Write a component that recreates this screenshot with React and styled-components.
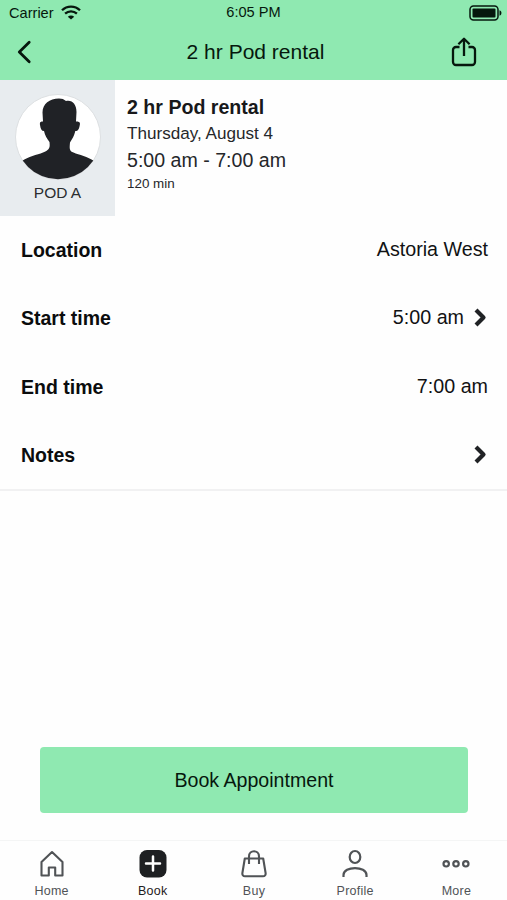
import React from 'react';
import styled, { createGlobalStyle } from 'styled-components';

const GlobalStyle = createGlobalStyle`
  * {
    box-sizing: border-box;
  }
  body {
    margin: 0;
    background: #fefefe;
    font-family: "Liberation Sans", Arial, sans-serif;
  }
  p {
    margin: 0;
  }
  svg {
    display: block;
  }
`;

const Screen = styled.div`
  display: flex;
  flex-direction: column;
  width: 507px;
  height: 900px;
  overflow: hidden;
  color: #111213;
`;

const Header = styled.header`
  height: 80px;
  background: #8fe9b1;
  color: #06170d;
`;

const StatusBar = styled.div`
  display: grid;
  grid-template-columns: 1fr auto 1fr;
  align-items: center;
  height: 24px;
  padding: 0 5px 0 9px;
  font-size: 14.6px;
`;

const Carrier = styled.div`
  display: flex;
  align-items: center;
  gap: 7px;
  padding-top: 1px;
`;

const Clock = styled.div`
  margin-right: 4px;
`;

const Battery = styled.div`
  justify-self: end;
  padding-top: 2px;
`;

const TitleBar = styled.div`
  display: grid;
  grid-template-columns: 48px 1fr 48px;
  align-items: center;
  height: 56px;
  padding: 0 30px 0 12px;
`;

const Title = styled.h1`
  margin: 0;
  padding-left: 22px;
  text-align: center;
  font-size: 21px;
  font-weight: 400;
`;

const IconButton = styled.button`
  display: flex;
  justify-content: ${({ $end }) => ($end ? 'flex-end' : 'flex-start')};
  padding: 0;
  border: 0;
  background: none;
  color: inherit;
`;

const Summary = styled.section`
  display: flex;
  height: 137px;
`;

const Provider = styled.div`
  display: flex;
  flex-direction: column;
  align-items: center;
  width: 115px;
  height: 136px;
  padding-top: 14px;
  background: #e8ecef;
  color: #2b2d30;
  font-size: 15.5px;
  line-height: 18px;

  > svg {
    margin-bottom: 4px;
  }
`;

const Details = styled.div`
  padding: 15px 0 0 12px;
`;

const Line = styled.p`
  height: ${({ $height }) => $height}px;
  color: ${({ $bold }) => ($bold ? '#17181a' : '#25272a')};
  font-size: ${({ $size }) => $size}px;
  font-weight: ${({ $bold }) => ($bold ? 700 : 400)};
  line-height: 24px;
  white-space: nowrap;
`;

const List = styled.section`
  height: 274px;
  border-bottom: 2px solid #f1f1f2;
`;

const Row = styled.div`
  display: flex;
  align-items: center;
  justify-content: space-between;
  height: 68.3px;
  padding: 0 19px 0 21px;
  font-size: 19.7px;
`;

const Label = styled.div`
  padding-bottom: 1px;
  font-weight: 700;
  font-size: 19.5px;
  color: #0b0c0d;
`;

const Value = styled.div`
  display: flex;
  align-items: center;
  gap: 10px;
  padding-bottom: 3px;
`;

const Action = styled.div`
  display: flex;
  flex: 1;
  flex-direction: column;
  justify-content: flex-end;
  padding: 0 39px 27px 40px;
`;

const BookButton = styled.button`
  height: 66px;
  border: 0;
  border-radius: 4px;
  background: #8fe9b1;
  color: #06170d;
  font-family: inherit;
  font-size: 19.6px;
`;

const TabBar = styled.nav`
  display: grid;
  grid-template-columns: repeat(5, 1fr);
  height: 60px;
  padding-left: 1px;
  border-top: 1px solid #f4f5f5;
`;

const Tab = styled.div`
  display: flex;
  flex-direction: column;
  align-items: center;
  gap: 5px;
  padding-top: 8px;
  color: ${({ $active }) => ($active ? '#1e2022' : '#505356')};
  font-size: 12.5px;
  letter-spacing: 0.25px;
  line-height: 15px;
`;

const WifiIcon = () => (
  <svg width="20" height="15" viewBox="0 0 20 15" fill="none" stroke="currentColor" strokeWidth="2.3">
    <path d="M1 5.2C6 .3 14 .3 19 5.2M4.1 8.7c3.4-3.2 8.4-3.2 11.800 0" />
    <path d="M10 14.500 6.800 11.700c1.800-1.600 4.600-1.600 6.400 0Z" fill="currentColor" stroke="none" />
  </svg>
);

const BatteryIcon = () => (
  <svg width="33" height="16" viewBox="0 0 33 16">
    <rect x="1" y="1" width="28" height="14" rx="3.5" fill="none" stroke="currentColor" strokeWidth="1.5" />
    <rect x="3.5" y="3.5" width="23" height="9" rx="1" fill="currentColor" />
    <path d="M30.5 5.300c2.600.8 2.600 4.600 0 5.400Z" fill="currentColor" />
  </svg>
);

const BackIcon = () => (
  <svg width="24" height="24" viewBox="0 0 24 24" fill="none" stroke="currentColor" strokeWidth="2.8">
    <path d="M17.2 2.3 7.3 12l9.900 9.700" strokeLinejoin="round" strokeLinecap="round" />
  </svg>
);

const ShareIcon = () => (
  <svg width="26" height="30" viewBox="0 0 26 30" fill="none" stroke="currentColor" strokeWidth="2.3">
    <path d="M8.5 10H5a3 3 0 0 0-3 3v12a3 3 0 0 0 3 3h16a3 3 0 0 0 3-3V13a3 3 0 0 0-3-3h-3.5" />
    <path d="M13 19V1.8M7.4 7.2 13 1.7l5.6 5.5" strokeLinejoin="round" />
  </svg>
);

const Avatar = () => (
  <svg width="86" height="86" viewBox="0 0 86 86">
    <defs>
      <clipPath id="avatar">
        <circle cx="43" cy="43" r="42.3" />
      </clipPath>
    </defs>
    <circle cx="43" cy="43" r="42.5" fill="#fff" stroke="#dde0e2" />
    <path
      clipPath="url(#avatar)"
      fill="#202226"
      d="M44 4.500c3 0 5 .8 7 2.500 6-1.500 10.500 3 10.500 11L61 27.500c3 0 4.500.5 3.800 3.500-.8 4-1.500 6-4.500 6-1 4.500-3 8-5.300 11.500-.5 6-1 8.500 3.500 10C64 61 73 62.500 79 67v20H7V67c6-4.500 15-6 21-8.500 7-2.500 7-5 6.500-10.500-2.500-3.500-4.500-6.500-5.500-11-2.500 0-3.300-2-4-6-.5-3 .5-3.500 3-3.500l-.5-9C27.500 10 34.500 4.500 44 4.500Z"
    />
  </svg>
);

const Chevron = () => (
  <svg width="14" height="19" viewBox="0 0 14 19" fill="none" stroke="#202225" strokeWidth="4.2" strokeLinejoin="round">
    <path d="m2 2 7.500 7.500L2 17" />
  </svg>
);

const HomeIcon = () => (
  <svg width="30" height="30" viewBox="0 0 30 30" fill="none" stroke="currentColor" strokeWidth="2.1" strokeLinejoin="round">
    <path d="M4.500 13 15 3l10.500 10v13.500h-7.300v-8h-6.400v8H4.500Z" />
  </svg>
);

const PlusIcon = () => (
  <svg width="30" height="30" viewBox="0 0 30 30">
    <rect x="1.500" y="1" width="27" height="27.500" rx="7.500" fill="currentColor" />
    <path d="M15 7.500v14M8 14.500h14" stroke="#fff" strokeWidth="2.500" strokeLinecap="round" />
  </svg>
);

const BagIcon = () => (
  <svg width="30" height="30" viewBox="0 0 30 30" fill="none" stroke="currentColor" strokeWidth="2.1" strokeLinejoin="round">
    <path d="M5.800 9.500h18.400l2.400 14.500c.3 2-.8 3.300-2.600 3.300H6c-1.800 0-2.900-1.300-2.600-3.300Z" />
    <path d="M10 15V7.500C10 .5 20 .5 20 7.500V15" />
  </svg>
);

const ProfileIcon = () => (
  <svg width="30" height="30" viewBox="0 0 30 30" fill="none" stroke="currentColor" strokeWidth="2.200">
    <ellipse cx="15" cy="8" rx="5.300" ry="6" />
    <path d="M3.500 28v-2c0-9.300 23-9.300 23 0v2" />
  </svg>
);

const MoreIcon = () => (
  <svg width="30" height="30" viewBox="0 0 30 30" fill="none" stroke="currentColor" strokeWidth="2.200">
    <circle cx="5.200" cy="14.800" r="2.700" />
    <circle cx="15" cy="14.800" r="2.700" />
    <circle cx="24.800" cy="14.800" r="2.700" />
  </svg>
);

const rows = [
  { label: 'Location', value: 'Astoria West' },
  { label: 'Start time', value: '5:00 am', link: true },
  { label: 'End time', value: '7:00 am' },
  { label: 'Notes', link: true },
];

const tabs = [
  { label: 'Home', Icon: HomeIcon },
  { label: 'Book', Icon: PlusIcon, active: true },
  { label: 'Buy', Icon: BagIcon },
  { label: 'Profile', Icon: ProfileIcon },
  { label: 'More', Icon: MoreIcon },
];

const App = () => (
  <Screen>
    <GlobalStyle />
    <Header>
      <StatusBar>
        <Carrier>Carrier <WifiIcon /></Carrier>
        <Clock>6:05 PM</Clock>
        <Battery><BatteryIcon /></Battery>
      </StatusBar>
      <TitleBar>
        <IconButton aria-label="Back"><BackIcon /></IconButton>
        <Title>2 hr Pod rental</Title>
        <IconButton aria-label="Share" $end><ShareIcon /></IconButton>
      </TitleBar>
    </Header>
    <Summary>
      <Provider>
        <Avatar />
        POD A
      </Provider>
      <Details>
        <Line $size={19.6} $height={27} $bold>2 hr Pod rental</Line>
        <Line $size={17.1} $height={26}>Thursday, August 4</Line>
        <Line $size={19.6} $height={24}>5:00 am - 7:00 am</Line>
        <Line $size={13.4} $height={24}>120 min</Line>
      </Details>
    </Summary>
    <List>
      {rows.map(({ label, value, link }) => (
        <Row key={label}>
          <Label>{label}</Label>
          <Value>
            {value}
            {link && <Chevron />}
          </Value>
        </Row>
      ))}
    </List>
    <Action>
      <BookButton>Book Appointment</BookButton>
    </Action>
    <TabBar>
      {tabs.map(({ label, Icon, active }) => (
        <Tab key={label} $active={active}>
          <Icon />
          {label}
        </Tab>
      ))}
    </TabBar>
  </Screen>
);

export default App;
